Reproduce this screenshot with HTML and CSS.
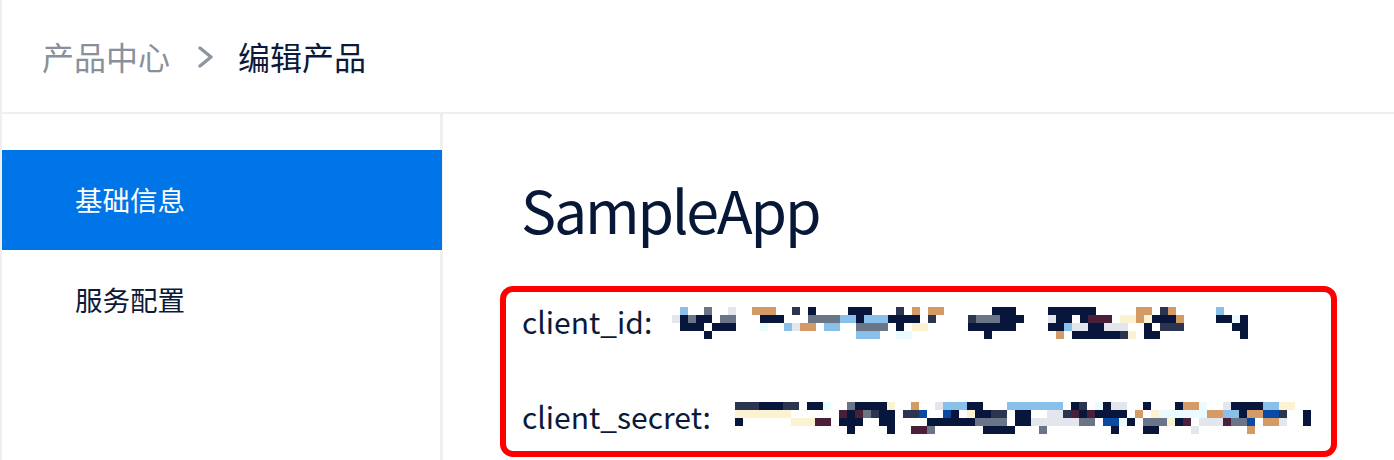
FILE: index.html
```html
<!DOCTYPE html>
<html lang="zh-CN">
<head>
<meta charset="utf-8">
<title>编辑产品</title>
<link rel="stylesheet" href="styles.css">
</head>
<body>
<div class="app">
  <header class="header">
    <nav class="crumbs">
      <span class="crumb-link">产品中心</span>
      <svg class="crumb-sep" width="18" height="22" viewBox="0 0 18 22"><path d="M3 2 L14 11 L3 20" fill="none" stroke="#8e96a3" stroke-width="3.4" stroke-linecap="round" stroke-linejoin="round"/></svg>
      <span class="crumb-current">编辑产品</span>
    </nav>
  </header>
  <div class="body">
    <aside class="sidebar">
      <div class="nav-item active">基础信息</div>
      <div class="nav-item">服务配置</div>
    </aside>
    <main class="main">
      <h1 class="title">SampleApp</h1>
      <section class="cred-box">
        <div class="cred-row">
          <span class="cred-label">client_id:</span>
          <span class="mosaic mosaic-id" id="mosaic-id"></span>
        </div>
        <div class="cred-row">
          <span class="cred-label">client_secret:</span>
          <span class="mosaic mosaic-secret" id="mosaic-secret"></span>
        </div>
      </section>
    </main>
  </div>
</div>
<script src="script.js"></script>
</body>
</html>
```
FILE: styles.css
```css
* { box-sizing: border-box; }
html, body { margin: 0; padding: 0; }
body {
  background: #efefef;
  font-family: "Noto Sans CJK SC", "Noto Sans", sans-serif;
  color: #0b1a38;
  overflow: hidden;
}
.app { padding-left: 2px; height: 460px; }
.header {
  height: 112px;
  background: #fff;
  margin-bottom: 2px;
  display: flex;
  align-items: center;
  padding-left: 40px;
}
.crumbs { display: flex; align-items: center; font-size: 32px; }
.crumb-link { color: #8a909b; }
.crumb-sep { margin: 2px 23px 0 27px; }
.crumb-current { color: #0b1a38; }

.body { display: flex; gap: 3px; height: 346px; }
.sidebar {
  width: 438px;
  background: #fff;
  padding-top: 36px;
}
.nav-item {
  height: 100px;
  display: flex;
  align-items: center;
  padding-left: 73px;
  padding-bottom: 2px;
  font-size: 27.5px;
  color: #0b1a38;
  margin-right: -2px;
}
.nav-item.active { background: #0075e7; color: #fff; }

.main {
  flex: 1;
  background: #fff;
  padding: 64px 57px 0 57px;
}
.title {
  margin: 0 0 47px 21px;
  font-size: 59px;
  line-height: 61px;
  letter-spacing: -2.2px;
  font-weight: 400;
  color: #061738;
}
.cred-box {
  border: 6px solid #ff0000;
  border-radius: 13px;
  height: 171px;
  padding: 0 0 0 16px;
}
.cred-row {
  height: 58px;
  display: flex;
  align-items: center;
  font-size: 30px;
}
.cred-row + .cred-row { margin-top: 37px; }
.cred-label { color: #0b1a38; }
.mosaic {
  display: grid;
  grid-template-columns: repeat(var(--cols, 72), 8px);
  grid-auto-rows: 8px;
  margin-top: 4px;
}
.mosaic-id { margin-left: 20px; }
.mosaic-secret { margin-left: 24px; }
.px { width: 8px; height: 8px; }
.c0 { background: transparent; }
.c1 { background: #07163a; }
.c2 { background: #2c3550; }
.c3 { background: #d49b66; }
.c4 { background: #88c0ea; }
.c5 { background: #fbf2d2; }
.c6 { background: #e3e6ec; }
.c7 { background: #0b4aa3; }
.c8 { background: #6b7588; }
.c9 { background: #e9fbff; }
.c10 { background: #4a1f3a; }
```
FILE: script.js
```js
(function () {
  function rng(seed) {
    return function () {
      seed = (seed * 1103515245 + 12345) % 2147483648;
      return seed / 2147483648;
    };
  }
  var palette = [
    ['c1', 46], ['c2', 9], ['c3', 10], ['c4', 8], ['c5', 7],
    ['c6', 6], ['c7', 5], ['c8', 7], ['c9', 5], ['c10', 3]
  ];
  var total = palette.reduce(function (s, p) { return s + p[1]; }, 0);
  function pick(r) {
    var v = r() * total;
    for (var i = 0; i < palette.length; i++) {
      v -= palette[i][1];
      if (v < 0) return palette[i][0];
    }
    return 'c1';
  }
  function mosaic(id, width, segs, density, seed) {
    var el = document.getElementById(id);
    var r = rng(seed);
    var cols = Math.round(width / 8);
    el.style.setProperty('--cols', cols);
    var frag = document.createDocumentFragment();
    for (var row = 0; row < density.length; row++) {
      var prev = 'c0';
      for (var c = 0; c < cols; c++) {
        var x = c * 8;
        var inSeg = segs.some(function (s) { return x >= s[0] && x < s[1]; });
        var cls = 'c0';
        if (inSeg) {
          if (prev !== 'c0' && r() < 0.45) cls = prev;
          else if (r() < density[row]) cls = pick(r);
        }
        prev = cls;
        var d = document.createElement('span');
        d.className = 'px ' + cls;
        frag.appendChild(d);
      }
    }
    el.appendChild(frag);
  }
  mosaic('mosaic-id', 576,
    [[0, 64], [80, 186], [190, 266], [296, 352], [376, 510], [544, 576]],
    [0.35, 0.75, 0.7, 0.12], 12345);
  mosaic('mosaic-secret', 576,
    [[0, 160], [168, 576]],
    [0.45, 0.7, 0.6, 0.22], 987);
})();
```
